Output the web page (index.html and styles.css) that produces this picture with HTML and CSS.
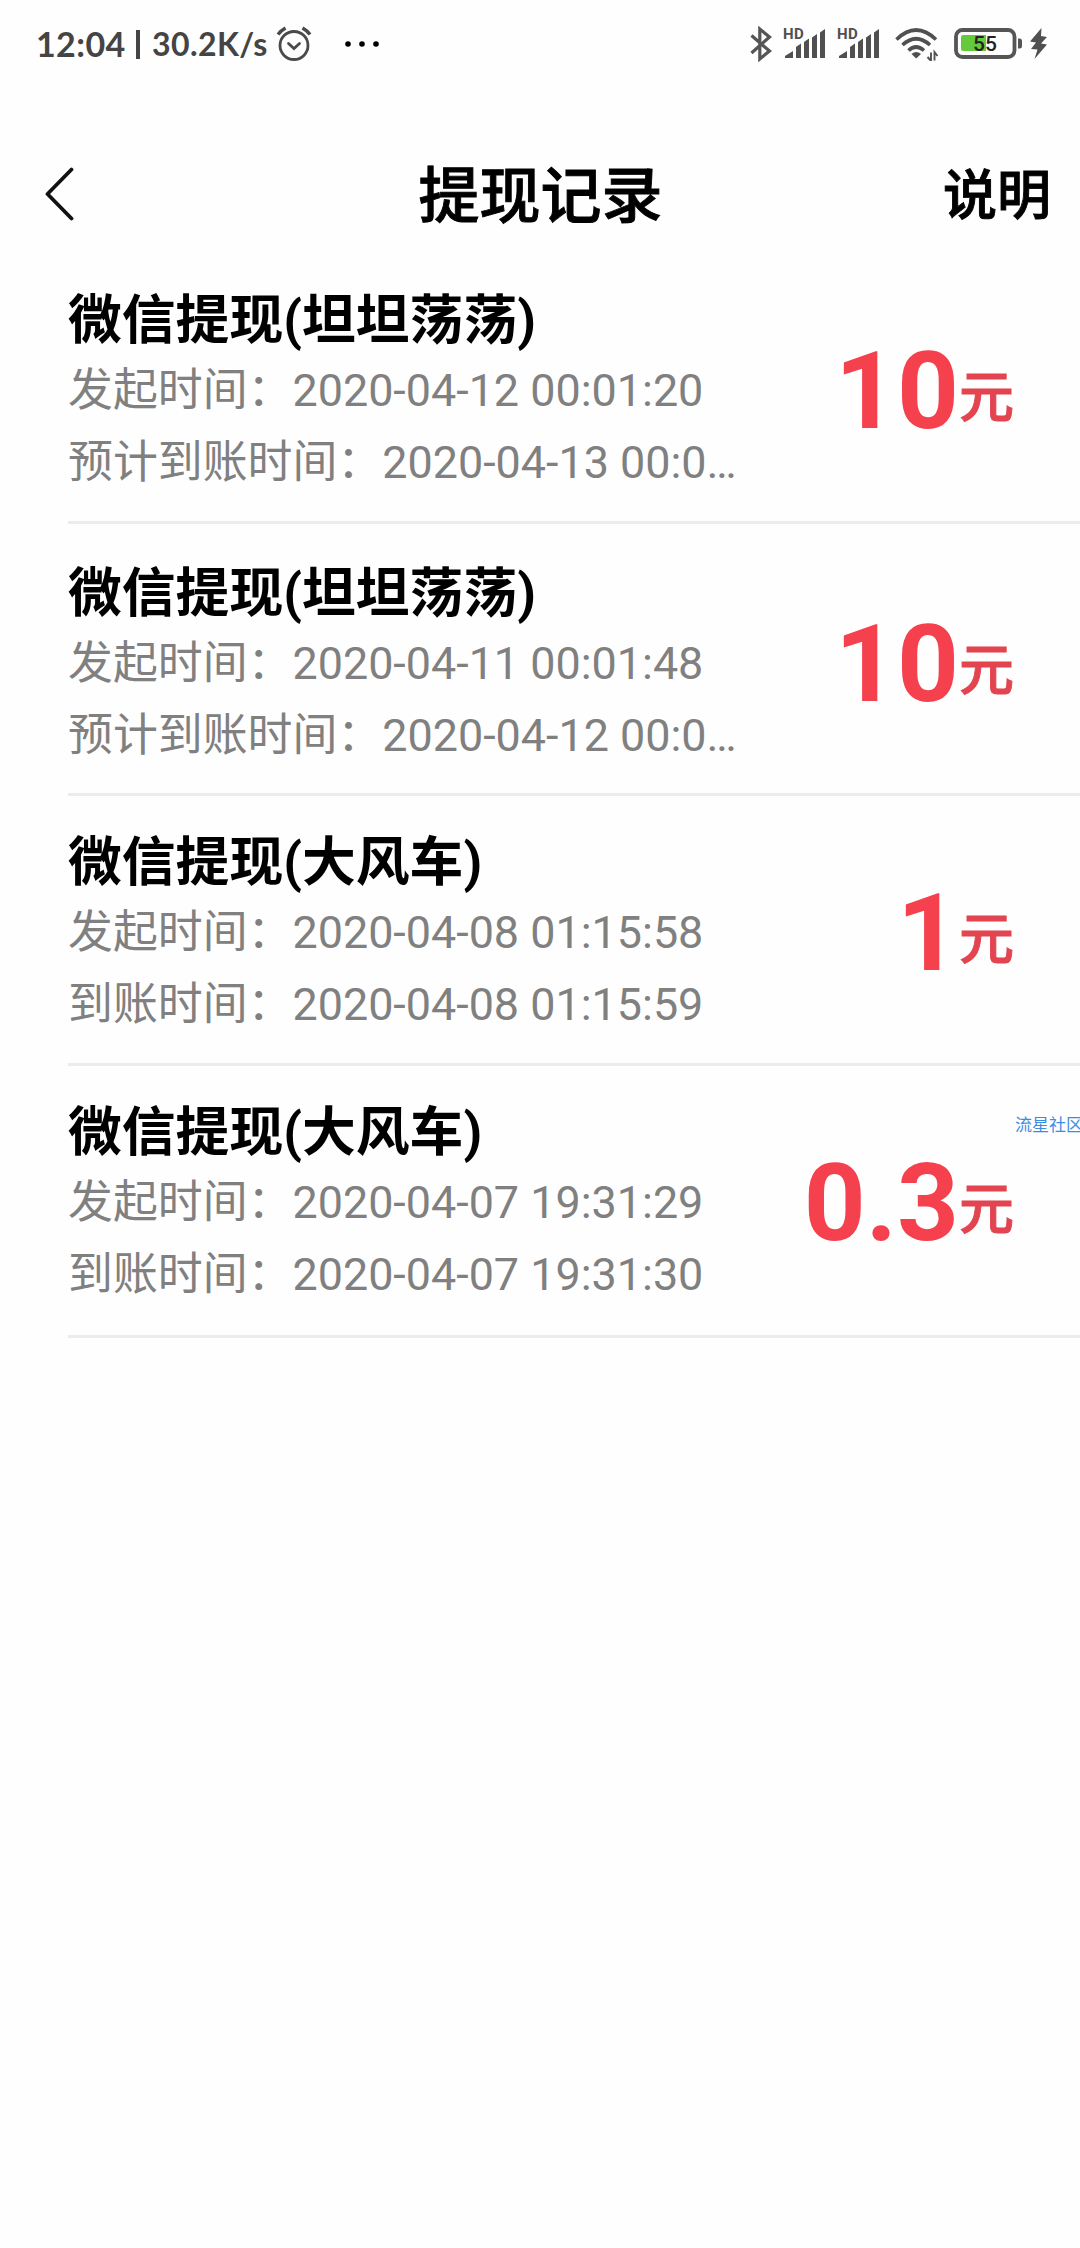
FILE: index.html
```html
<!DOCTYPE html>
<html lang="zh-CN">
<head>
<meta charset="utf-8">
<title>提现记录</title>
<link rel="stylesheet" href="styles.css">
</head>
<body>
<header class="status">
  <span class="clock">12:04</span>
  <span class="bar"></span>
  <span class="speed">30.2K/s</span>
  <svg class="alarm" width="36" height="36" viewBox="0 0 36 36" fill="none" stroke="#4a4a4a" stroke-width="2.8"><circle cx="18" cy="19.500" r="14"/><path d="M12.500 17.500l5.500 5 5.500-5" stroke-linecap="round"/><path d="M2 8.500Q5 4.500 9.500 2M34 8.500Q31 4.500 26.500 2" stroke-width="3.500"/></svg>
  <svg class="dots" width="34" height="6" viewBox="0 0 34 6"><circle cx="3" cy="3" r="2.800"/><circle cx="17" cy="3" r="2.800"/><circle cx="31" cy="3" r="2.800"/></svg>
  <svg class="bluetooth" width="22" height="36" viewBox="0 0 22 36" fill="none" stroke="#555" stroke-width="3.200"><path d="M1.500 9.500L19.500 25 9.800 33V3L19.500 11 1.500 27"/></svg>
  <svg class="signal" width="42" height="32" viewBox="0 0 42 32" fill="#505050"><text x="-1" y="11" class="hd">HD</text><path d="M1 30v-2l8-5v7zM12 30V19l5-3.500V30zM20 30V14l5-3.500V30zM28 30V9.500l5-3.500V30zM36 30V4.500l5-3.500V30z"/></svg>
  <svg class="signal" width="42" height="32" viewBox="0 0 42 32" fill="#505050"><text x="-1" y="11" class="hd">HD</text><path d="M1 30v-2l8-5v7zM12 30V19l5-3.500V30zM20 30V14l5-3.500V30zM28 30V9.500l5-3.500V30zM36 30V4.500l5-3.500V30z"/></svg>
  <svg class="wifi" width="44" height="34" viewBox="0 0 44 34" fill="none" stroke="#505050" stroke-width="3.600"><path d="M1.500 12.500Q21 -6.500 41 12.500M7.500 18Q21 5.500 35 18M13.500 23.500Q21 16.500 29 23.500"/><path d="M16.500 27q4.800-4 9.500 0l-4.800 4.500z" fill="#505050" stroke="none"/><path d="M36 25.500v8.500l-3.500-4M39.500 33.500V25l3 4" stroke-width="1.900"/></svg>
  <svg class="battery" width="68" height="32" viewBox="0 0 68 32"><rect x="2" y="2" width="58.500" height="27" rx="6.500" fill="none" stroke="#555" stroke-width="3.800"/><path d="M9 7h23v16H9a2 2 0 0 1-2-2V9a2 2 0 0 1 2-2z" fill="#64c93c"/><path d="M64 10.500h1.500a2.500 2.500 0 0 1 2.500 2.500v5a2.500 2.500 0 0 1-2.500 2.500H64z" fill="#555"/><text x="31" y="22.500" text-anchor="middle" class="level">55</text></svg>
  <svg class="bolt" width="18" height="32" viewBox="0 0 18 32" fill="#505050"><path d="M11.500 0L0 13.500l6 1L1 21l6.500.500L4.500 31 17 16.500l-6-1L17 9l-6-1z"/></svg>
</header>
<nav class="nav">
  <svg class="back" width="30" height="58" viewBox="0 0 30 58" fill="none" stroke="#111" stroke-width="3.800" stroke-linecap="round" stroke-linejoin="round"><path d="M27.500 4.500L3.500 29l24 24.500"/></svg>
  <h1 class="title">提现记录</h1>
  <span class="help">说明</span>
</nav>
<main class="list">
  <section class="row">
    <div class="info"><h2 class="name">微信提现(坦坦荡荡)</h2><p class="line">发起时间：2020-04-12 00:01:20</p><p class="line">预计到账时间：2020-04-13 00:0…</p></div>
    <div class="amount"><span class="num">10</span><span class="unit">元</span></div>
  </section>
  <section class="row second">
    <div class="info"><h2 class="name">微信提现(坦坦荡荡)</h2><p class="line">发起时间：2020-04-11 00:01:48</p><p class="line">预计到账时间：2020-04-12 00:0…</p></div>
    <div class="amount"><span class="num">10</span><span class="unit">元</span></div>
  </section>
  <section class="row short">
    <div class="info"><h2 class="name">微信提现(大风车)</h2><p class="line">发起时间：2020-04-08 01:15:58</p><p class="line">到账时间：2020-04-08 01:15:59</p></div>
    <div class="amount"><span class="num">1</span><span class="unit">元</span></div>
  </section>
  <section class="row last">
    <div class="info"><h2 class="name">微信提现(大风车)</h2><p class="line">发起时间：2020-04-07 19:31:29</p><p class="line">到账时间：2020-04-07 19:31:30</p></div>
    <div class="amount"><span class="num">0.3</span><span class="unit">元</span></div>
    <span class="mark">流星社区</span>
  </section>
</main>
</body>
</html>
```
FILE: styles.css
```css
* { box-sizing: border-box; }
body {
  margin: 0;
  min-height: 2248px;
  background: #fefefe;
  color: #000;
  font-family: Roboto, "Noto Sans CJK SC", sans-serif;
  overflow-x: hidden;
}
h1, h2, p { margin: 0; }
svg { display: block; flex: none; }
.status {
  display: flex;
  align-items: center;
  height: 88px;
  padding-left: 36px;
  color: #444;
  font-family: Lato, sans-serif;
  font-weight: 700;
  white-space: nowrap;
}
.clock { width: 100px; font-size: 34px; line-height: 40px; letter-spacing: 0.4px; }
.bar { width: 4px; height: 29px; background: #444; }
.speed { width: 124px; margin-left: 12px; font-size: 32px; line-height: 40px; letter-spacing: 0.4px; }
.dots { margin-left: 33px; }
.bluetooth { margin-left: 371px; }
.signal { margin-left: 12px; overflow: visible; }
.hd { font: 700 15px Roboto, sans-serif; letter-spacing: 0.5px; }
.wifi { margin-left: 15px; }
.battery { margin-left: 15px; }
.level { font: 500 21px Roboto, sans-serif; fill: #222; }
.bolt { margin-left: 8px; }
.nav {
  display: grid;
  grid-template-columns: 1fr auto 1fr;
  align-items: center;
  height: 164px;
  padding: 54px 29px 0 44px;
}
.back { margin-bottom: 6px; }
.title { margin-left: -14px; font-size: 61px; line-height: 80px; }
.help { justify-self: end; font-size: 54px; line-height: 72px; }
.title, .help { font-weight: 500; -webkit-text-stroke: 0.9px #000; }
.row {
  position: relative;
  display: flex;
  justify-content: space-between;
  height: 272px;
  margin-left: 68px;
  padding: 34px 66px 0 0;
  border-bottom: 3px solid #ececec;
}
.short { height: 270px; }
.second { padding-top: 35px; }
.short, .last { padding-top: 32px; }
.info { width: 680px; }
.name { margin-bottom: -1px; font-size: 53.8px; line-height: 70px; font-weight: 700; }
.line {
  color: #808080;
  font-size: 44.9px;
  line-height: 72px;
  white-space: nowrap;
}
.amount { display: flex; align-items: flex-start; color: #f5414d; font-weight: 700; }
.num { padding-top: 41px; font-size: 108px; line-height: 128px; }
.unit { padding-top: 76px; color: #e24450; font-size: 55px; line-height: 70px; font-weight: 500; -webkit-text-stroke: 0.9px #e24450; }
.mark {
  position: absolute;
  top: 47px;
  right: -3px;
  color: #3b8de4;
  font-size: 17px;
  line-height: 24px;
}
```
